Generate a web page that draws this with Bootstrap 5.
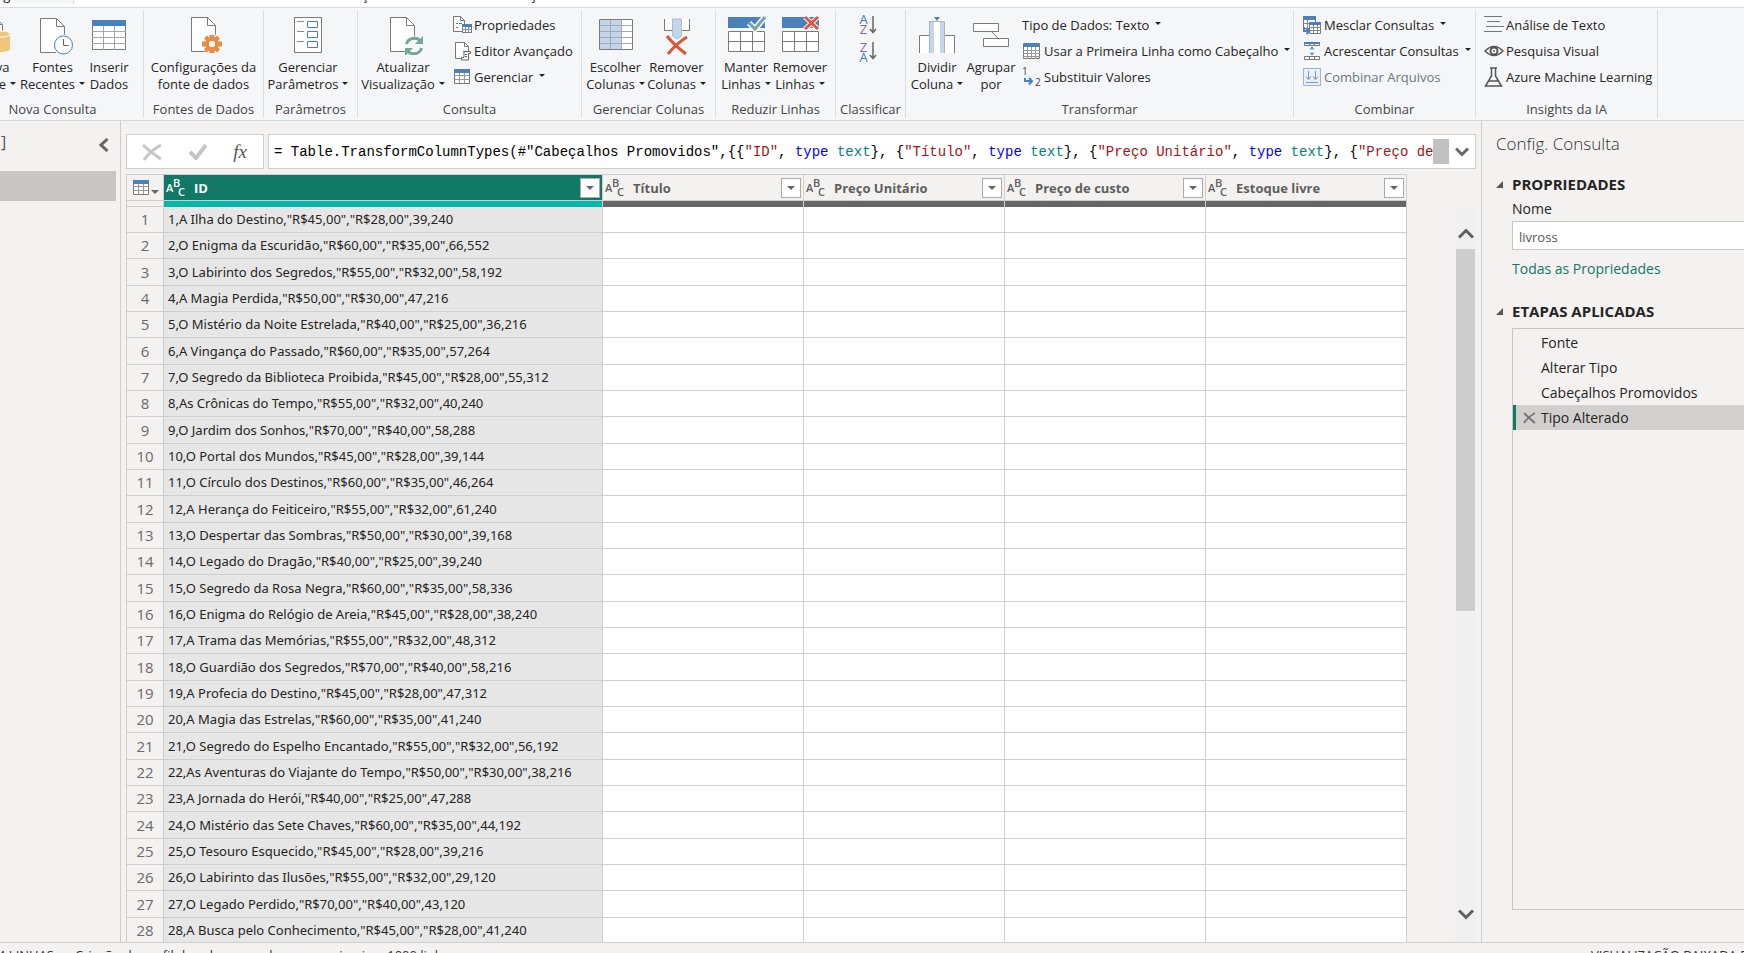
<!DOCTYPE html>
<html lang="pt-BR">
<head>
<meta charset="utf-8">
<meta name="viewport" content="width=device-width, initial-scale=1">
<title>Editor do Power Query</title>
<link href="https://cdn.jsdelivr.net/npm/bootstrap@5.3.0/dist/css/bootstrap.min.css" rel="stylesheet">
<style>
  :root { --line: #d0cecc; --pane: #f3f2f1; --ribbon: #f5f6f8; --ink: #252423; --accent: #117865; }
  body { font-family: "Open Sans", "Noto Sans", sans-serif; font-size: 13px; line-height: 17px; color: var(--ink); background: var(--pane); }
  button { font: inherit; color: inherit; background: none; border: 0; padding: 0; }
  svg { display: block; flex: none; }

  .tab-strip { height: 8px; background: #fff; border-bottom: 1px solid #d8dadc; gap: 32px; padding-left: 90px; }
  .tab-strip a { color: var(--ink); text-decoration: none; white-space: nowrap; line-height: 17px; margin-bottom: 3px; }
  .tab-strip .current-tab { position: absolute; left: 0; width: 74px; height: 8px; background: var(--ribbon); border-right: 1px solid #d8dadc; display: flex; align-items: flex-end; justify-content: flex-end; padding-right: 6px; overflow: hidden; }

  .ribbon { display: grid; grid-template-columns: 144px 120px 94px 224px 134px 120px 70px 388px 182px 182px; height: 113px; background: var(--ribbon); border-bottom: 1px solid #d4d6d8; padding: 2px 0; }
  .ribbon-group { border-right: 1px solid #dcdee0; display: flex; flex-direction: column; min-width: 0; overflow: hidden; }
  .ribbon-body { flex: 1; display: flex; justify-content: center; min-width: 0; }
  .ribbon-title { text-align: center; color: #444; height: 17px; }
  .new-query .ribbon-body { justify-content: flex-end; gap: 4px; padding-right: 14px; }
  .new-query .ribbon-title { padding-right: 38px; }
  .lean-left { padding-right: 5px; }
  .big-btn { display: flex; flex-direction: column; align-items: center; white-space: nowrap; padding-top: 5px; flex: none; }
  .big-btn svg.pic { width: 40px; height: 40px; margin-bottom: 4px; }
  .small-stack { display: flex; flex-direction: column; align-items: flex-start; padding-top: 2px; }
  .small-btn { display: flex; align-items: center; height: 26px; gap: 2px; white-space: nowrap; }
  .small-btn svg.pic { width: 20px; height: 20px; }
  .caret { display: inline-block; border: 3px solid transparent; border-top-color: #222; border-bottom: 0; margin-left: 4px; vertical-align: 4px; }
  .small-btn .caret { margin-bottom: 4px; }
  .w-sm { width: 54px; } .w-md { width: 61px; } .w-lg { width: 90px; }
  .sort-btn { display: flex; align-items: center; gap: 1px; font-size: 13px; line-height: 10px; }
  .sort-btn > span { display: flex; flex-direction: column; align-items: center; }
  .letter-a { color: #3f78b8; }
  .letter-z { color: #8d5fb5; }

  .queries { width: 121px; border-right: 1px solid var(--line); }
  .queries-head { height: 50px; padding: 13px 11px 0 1px; font-size: 16px; color: #555; }
  .query-selected { height: 30px; margin-right: 4px; background: #c8c6c4; }

  .formula-row { padding: 13px 5px 5px; gap: 4px; }
  .formula-tools { width: 138px; height: 35px; border: 1px solid var(--line); background: #fff; padding: 0 16px 0 15px; }
  .fx-btn { font-family: "Liberation Serif", serif; font-size: 19px; font-style: italic; color: #555; }
  .formula-box { height: 35px; border: 1px solid var(--line); background: #fff; padding-left: 5px; min-width: 0; }
  .formula-text { font-family: "Liberation Mono", monospace; font-size: 14px; line-height: 19px; padding-top: 2px; white-space: pre; overflow: hidden; color: #000; }
  .formula-text b { font-weight: 400; color: #a31515; }
  .formula-text i { font-style: normal; color: #0000ff; }
  .formula-text u { text-decoration: none; color: #008080; }
  .formula-thumb { width: 16px; height: 25px; background: #c2c1bf; }
  .formula-more { width: 26px; }

  .grid-row { min-height: 0; padding: 0 5px; overflow: hidden; }
  .data-grid { table-layout: fixed; width: 1281px; border-collapse: separate; border-spacing: 0; border-left: 1px solid var(--line); border-top: 1px solid var(--line); align-self: flex-start; background: #fff; }
  .data-grid th, .data-grid td { border-right: 1px solid var(--line); border-bottom: 1px solid var(--line); padding: 0; white-space: nowrap; overflow: hidden; font-size: 13px; line-height: 17px; }
  .num-col { width: 37px; } .id-col { width: 439px; } .val-col { width: 201px; }
  .data-grid thead th { height: 26px; background: var(--pane); color: #605e5c; font-weight: 700; }
  .data-grid thead th.picked { background: var(--accent); color: #fff; }
  .data-grid .quality-bar td { height: 6px; background: #666; border-bottom: 0; }
  .data-grid .quality-bar td:first-child { background: var(--pane); border-bottom: 1px solid var(--line); }
  .data-grid .quality-bar td.picked { background: #01b8aa; }
  .data-grid tbody tr { height: 26px; }
  .data-grid tbody tr:nth-child(3n) { height: 27px; }
  .data-grid tbody th { background: var(--pane); color: #6b6967; font-weight: 400; font-size: 15px; text-align: center; }
  .data-grid tbody td:nth-child(2) { background: #e6e6e6; padding-left: 4px; font-family: "Noto Sans", sans-serif; }
  .col-head { display: flex; align-items: center; height: 25px; padding: 0 2px; }
  .col-head span { flex: 1; padding: 2px 0 0 8px; }
  .filter-btn { width: 20px; height: 20px; background: #fff; border: 1px solid #acaaa8; display: flex; align-items: center; justify-content: center; }
  .tri { border: 4px solid transparent; border-top-color: #666; border-bottom: 0; }
  .v-scroll { width: 21px; margin-top: 32px; background: #f0f0f0; padding: 22px 0; }
  .v-thumb { width: 19px; height: 362px; margin-top: 10px; background: #cdcdcd; }

  .settings { width: 263px; border-left: 1px solid var(--line); padding: 11px 0 32px 14px; font-size: 14px; }
  .settings h2 { font-size: 17px; line-height: 24px; font-weight: 300; margin: 0 0 18px; color: #333; }
  .settings h3 { font-size: 15px; line-height: 20px; font-weight: 700; margin: 0; display: flex; align-items: center; }
  .settings h3 svg { margin-right: 9px; }
  .indent { padding-left: 16px; }
  .settings label { line-height: 24px; padding-top: 3px; display: block; }
  .settings input { width: 100%; height: 29px; border: 1px solid #c8c6c4; border-right: 0; border-radius: 0; padding: 4px 6px 2px; color: #555; font-size: 13px; background: #fff; }
  .settings a { color: var(--accent); text-decoration: none; display: block; line-height: 20px; margin: 9px 0 22px; }
  .steps { flex: 1; margin-left: 16px; border: 1px solid #c8c6c4; border-right: 0; margin-top: 7px; padding: 1px 0 0; list-style: none; }
  .steps li { height: 25px; line-height: 25px; padding-left: 27px; border-left: 1px solid transparent; }
  .steps li.active-step { background: #d2d0ce; border-left: 3px solid var(--accent); padding-left: 7px; display: flex; align-items: center; gap: 5px; }

  .status-bar { height: 11px; border-top: 1px solid var(--line); overflow: hidden; padding-top: 4px; white-space: nowrap; color: #333; }
  .status-counts { width: 54px; display: flex; justify-content: flex-end; margin-right: 21px; }
  .status-preview { width: 153px; }
</style>
</head>
<body class="d-flex flex-column vh-100 overflow-hidden">

<svg class="d-none" aria-hidden="true">
  <symbol id="i-abc" viewBox="0 0 20 20"><g fill="currentColor" font-family="Open Sans, Noto Sans, sans-serif" font-weight="600" font-size="11"><text x="0" y="14">A</text><text x="7" y="9">B</text><text x="12" y="18">C</text></g></symbol>
  <symbol id="i-mini-table" viewBox="0 0 20 20"><path d="M2.500 2.500h15v14h-15z" fill="#fff" stroke="#777"/><path d="M2.500 8.500h15M2.500 12.500h15M7.500 5v11M12.500 5v11" stroke="#999" fill="none"/><path d="M2 2h16v4H2z" fill="#4a80bb"/></symbol>
</svg>

<nav class="tab-strip d-flex align-items-end flex-shrink-0 overflow-hidden position-relative" aria-label="Guias">
  <a class="current-tab" href="#">Página Inicial</a>
  <a href="#">Transformar</a><a href="#">Adicionar Coluna</a><a href="#">Exibição</a><a href="#">Ferramentas</a><a href="#">Ajuda</a>
</nav>

<header class="ribbon flex-shrink-0">
  <section class="ribbon-group new-query">
    <div class="ribbon-body">
      <button class="big-btn"><svg class="pic" viewBox="0 0 40 40"><path d="M10.500 2.500h11l7 7v24h-18z" fill="#fff" stroke="#7a7a7a"/><path d="M21.500 2.500v7h7" fill="none" stroke="#7a7a7a"/><path d="M20 19v16q8 4 16 0V19z" fill="#efc577"/><ellipse cx="28" cy="19" rx="8" ry="3" fill="#efc577" stroke="#fff"/></svg><span>Nova</span><span>Fonte<i class="caret"></i></span></button>
      <button class="big-btn"><svg class="pic" viewBox="0 0 40 40"><path d="M7.500 3.500h16l8 8v26h-24z" fill="#fff" stroke="#7a7a7a"/><path d="M23.500 3.500v8h8" fill="none" stroke="#7a7a7a"/><circle cx="30.500" cy="30" r="10.500" fill="#f5f6f8"/><circle cx="30.500" cy="30" r="9" fill="#fff" stroke="#4a80bb"/><path d="M30.500 24v6.500h5" fill="none" stroke="#666"/></svg><span>Fontes</span><span>Recentes<i class="caret"></i></span></button>
      <button class="big-btn"><svg class="pic" viewBox="0 0 40 40"><path d="M3.500 5.500h33v29h-33z" fill="#fff" stroke="#7a7a7a"/><path d="M3 16.500h34M3 22.500h34M3 28.500h34M14.500 11v24M25.500 11v24" stroke="#a8a8a8"/><path d="M3 5h34v6H3z" fill="#4a80bb"/></svg><span>Inserir</span><span>Dados</span></button>
    </div>
    <div class="ribbon-title">Nova Consulta</div>
  </section>

  <section class="ribbon-group">
    <div class="ribbon-body">
      <button class="big-btn"><svg class="pic" viewBox="0 0 40 40"><path d="M7.500 2.500h16l8 8v26h-24z" fill="#fff" stroke="#7a7a7a"/><path d="M23.500 2.500v8h8" fill="none" stroke="#7a7a7a"/><circle cx="28" cy="29" r="10" fill="#f5f6f8"/><circle cx="28" cy="29" r="5" fill="none" stroke="#e68e45" stroke-width="4"/><path d="M25.500 20h5v5h-5zM25.500 33h5v5h-5zM18 26.500h5v5h-5zM33 26.500h5v5h-5zM20 23.500l3-3 4 4-3 3zM36 23.500l-3-3-4 4 3 3zM20 34.500l3 3 4-4-3-3zM36 34.500l-3 3-4-4 3-3z" fill="#e68e45"/><circle cx="28" cy="29" r="3" fill="#f5f6f8"/></svg><span>Configurações da</span><span>fonte de dados</span></button>
    </div>
    <div class="ribbon-title">Fontes de Dados</div>
  </section>

  <section class="ribbon-group">
    <div class="ribbon-body lean-left">
      <button class="big-btn"><svg class="pic" viewBox="0 0 40 40"><path d="M6.500 2.500h27v35h-27z" fill="#fff" stroke="#7a7a7a"/><path d="M9 6.500h7M9 16.500h7M9 26.500h7" stroke="#888"/><path d="M19.500 6.500h10v6h-10zM19.500 16.500h10v6h-10zM19.500 26.500h10v6h-10z" fill="#fff" stroke="#4a80bb"/></svg><span>Gerenciar</span><span>Parâmetros<i class="caret"></i></span></button>
    </div>
    <div class="ribbon-title">Parâmetros</div>
  </section>

  <section class="ribbon-group">
    <div class="ribbon-body justify-content-start gap-1">
      <button class="big-btn w-lg"><svg class="pic" viewBox="0 0 40 40"><path d="M7.500 2.500h16l8 8v26h-24z" fill="#fff" stroke="#7a7a7a"/><path d="M23.500 2.500v8h8" fill="none" stroke="#7a7a7a"/><circle cx="31" cy="31" r="10" fill="#f5f6f8"/><path d="M23.500 29a8 7.500 0 0 1 14-3M38.500 33a8 7.500 0 0 1-14 3" fill="none" stroke="#76a797" stroke-width="3"/><path d="M40 21v8h-8zM22 41v-8h8z" fill="#76a797"/></svg><span>Atualizar</span><span>Visualização<i class="caret"></i></span></button>
      <div class="small-stack">
        <button class="small-btn"><svg class="pic" viewBox="0 0 20 20"><path d="M1.500 1.500h7l4 4v11h-11z" fill="#fff" stroke="#777"/><path d="M8.500 1.500v4h4M4 8.500h2M7 8.500h3M4 12.500h2" fill="none" stroke="#777"/><path d="M10.500 9.500h9v8h-9z" fill="#fff" stroke="#777"/><path d="M10 9h10v3H10z" fill="#4a80bb"/><path d="M13.500 12v6M16.500 12v6M10 14.500h10" stroke="#888"/></svg>Propriedades</button>
        <button class="small-btn"><svg class="pic" viewBox="0 0 20 20"><path d="M3.500 1.500h9l4 4v12h-13z" fill="#fff" stroke="#777"/><path d="M12.500 1.500v4h4" fill="none" stroke="#777"/><path d="M11 10.500h7.500v2h-2v6.500H9.500v-2.500H12v-6" fill="#fff" stroke="#666"/><path d="M13 13.500h2M13 15.500h2" stroke="#666"/></svg>Editor Avançado</button>
        <button class="small-btn"><svg class="pic"><use href="#i-mini-table"/></svg>Gerenciar<i class="caret"></i></button>
      </div>
    </div>
    <div class="ribbon-title">Consulta</div>
  </section>

  <section class="ribbon-group">
    <div class="ribbon-body lean-left">
      <button class="big-btn w-md"><svg class="pic" viewBox="0 0 40 40"><path d="M3.500 4.500h33v30h-33z" fill="#fff"/><path d="M4 5h21v29H4z" fill="#c3d5ea"/><path d="M3 10.500h34M3 16.500h34M3 22.500h34M3 28.500h34M14.500 5v30M25.500 5v30" stroke="#a3a9b0"/><path d="M3.500 4.500h33v30h-33z" fill="none" stroke="#7a7a7a"/></svg><span>Escolher</span><span>Colunas<i class="caret"></i></span></button>
      <button class="big-btn w-md"><svg class="pic" viewBox="0 0 40 40"><path d="M7.500 4v11.500h8V4M24.500 4v11.500h8V4" fill="#fff" stroke="#7a7a7a"/><path d="M15.500 4h9v17l-4.500 3-4.500-3z" fill="#c3d5ea" stroke="#a9bdd3"/><path d="M10 21q6 8 19 18M29 22q-10 6-18 17" fill="none" stroke="#f5f6f8" stroke-width="5"/><path d="M10 21q6 8 19 18" fill="none" stroke="#d8593a" stroke-width="3"/><path d="M30 22q-10 6-19 17" fill="none" stroke="#d8593a" stroke-width="3"/></svg><span>Remover</span><span>Colunas<i class="caret"></i></span></button>
    </div>
    <div class="ribbon-title">Gerenciar Colunas</div>
  </section>

  <section class="ribbon-group">
    <div class="ribbon-body lean-left">
      <button class="big-btn w-sm"><svg class="pic" viewBox="0 0 40 40"><path d="M2 2h37v11H2z" fill="#4a80bb"/><path d="M2.500 16.500h36v20h-36zM2.500 26.500h36M14.500 16.500v20M26.500 16.500v20" fill="#fff" stroke="#7a7a7a"/><path d="M23 8l6 6L39 2" fill="none" stroke="#f5f6f8" stroke-width="6"/><path d="M23 8l6 6L39 2" fill="none" stroke="#76a797" stroke-width="3"/></svg><span>Manter</span><span>Linhas<i class="caret"></i></span></button>
      <button class="big-btn w-sm"><svg class="pic" viewBox="0 0 40 40"><path d="M2 2h37v11H2z" fill="#4a80bb"/><path d="M2.500 16.500h36v20h-36zM2.500 26.500h36M14.500 16.500v20M26.500 16.500v20" fill="#fff" stroke="#7a7a7a"/><path d="M25 2l13 12M38 2L25 14" stroke="#f5f6f8" stroke-width="5"/><path d="M25 2l13 12M38 2L25 14" stroke="#d8593a" stroke-width="3"/></svg><span>Remover</span><span>Linhas<i class="caret"></i></span></button>
    </div>
    <div class="ribbon-title">Reduzir Linhas</div>
  </section>

  <section class="ribbon-group">
    <div class="ribbon-body flex-column justify-content-start align-items-center gap-2 pt-1 lean-left">
      <button class="sort-btn" aria-label="Classificar em ordem crescente"><span><span class="letter-a">A</span><span class="letter-z">Z</span></span><svg width="8" height="20" viewBox="0 0 8 20"><path d="M4 2v17M1 15l3 3.500L7 15" fill="none" stroke="#666" stroke-width="1.500"/></svg></button>
      <button class="sort-btn" aria-label="Classificar em ordem decrescente"><span><span class="letter-z">Z</span><span class="letter-a">A</span></span><svg width="8" height="20" viewBox="0 0 8 20"><path d="M4 0v17M1 13l3 3.500L7 13" fill="none" stroke="#666" stroke-width="1.500"/></svg></button>
    </div>
    <div class="ribbon-title">Classificar</div>
  </section>

  <section class="ribbon-group">
    <div class="ribbon-body justify-content-start ps-1">
      <button class="big-btn w-sm"><svg class="pic" viewBox="0 0 40 40"><path d="M2.500 38V20.500h10V38M27.500 38V20.500h10V38" fill="#fff" stroke="#7a7a7a"/><path d="M12.500 38V6.500h15V38" fill="#fff" stroke="#a9b4c0"/><path d="M13 7h4v31h-4zM23 7h4v31h-4z" fill="#c3d5ea"/><path d="M17 2h6l-3 4z" fill="#4a80bb"/></svg><span>Dividir</span><span>Coluna<i class="caret"></i></span></button>
      <button class="big-btn w-sm"><svg class="pic" viewBox="0 0 40 40"><path d="M20 16l7 7" stroke="#7a7a7a"/><path d="M2.500 8.500h25v8h-25zM12.500 23.500h25v8h-25z" fill="#fff" stroke="#7a7a7a"/></svg><span>Agrupar</span><span>por</span></button>
      <div class="small-stack ms-1">
        <button class="small-btn">Tipo de Dados: Texto<i class="caret"></i></button>
        <button class="small-btn"><svg class="pic" viewBox="0 0 20 20"><path d="M1.500 2.500h16v15h-16z" fill="#fff" stroke="#777"/><path d="M1 9.500h17M1 12.500h17M1 15.500h17M5.500 3v15M9.500 3v15M13.500 3v15" stroke="#999"/><path d="M2 2h15v4H2z" fill="#4a80bb"/></svg>Usar a Primeira Linha como Cabeçalho<i class="caret"></i></button>
        <button class="small-btn"><svg class="pic" viewBox="0 0 20 20"><g font-size="10" fill="#444" font-family="Open Sans, sans-serif"><text x="0" y="8">1</text><text x="13" y="19">2</text></g><path d="M3 11v3h7M7 11l3 3-3 3.500" fill="none" stroke="#4a80bb" stroke-width="2"/></svg>Substituir Valores</button>
      </div>
    </div>
    <div class="ribbon-title">Transformar</div>
  </section>

  <section class="ribbon-group">
    <div class="ribbon-body justify-content-start ps-2">
      <div class="small-stack">
        <button class="small-btn"><svg class="pic" viewBox="0 0 20 20"><path d="M1.500 1.500h12v12h-12z" fill="#fff" stroke="#777"/><path d="M1 1h13v4H1z" fill="#4a80bb"/><path d="M5.500 5v8M1 8.500h12" stroke="#888"/><path d="M7.500 7.500h11v11h-11z" fill="#fff" stroke="#777"/><path d="M7 7h12v3H7z" fill="#4a80bb"/><path d="M11.500 10v8M15.500 10v8M7 12.500h12M7 15.500h12" stroke="#888"/><path d="M2 12v4h5M4.500 13.500l3 2.500-3 3" fill="none" stroke="#4a80bb" stroke-width="2"/></svg>Mesclar Consultas<i class="caret"></i></button>
        <button class="small-btn"><svg class="pic" viewBox="0 0 20 20"><path d="M2.500 1.500h15v3h-15zM2.500 15.500h15v3h-15zM7.500 2v3M12.500 2v3M7.500 15v3M12.500 15v3" fill="#fff" stroke="#777"/><path d="M2 1h16v2H2z" fill="#4a80bb"/><path d="M10 6v3M10 11v3M8 8.500L10 6l2 2.500M8 11.500l2 2.500 2-2.500" fill="none" stroke="#4a80bb"/></svg>Acrescentar Consultas<i class="caret"></i></button>
        <button class="small-btn text-secondary"><svg class="pic" viewBox="0 0 20 20"><path d="M1.500 1.500h17v17h-17z" fill="#e8f0fa" stroke="#9db4d0"/><path d="M6.500 4v8M4 9.500l2.500 3 2.500-3M13.500 4v8M11 9.500l2.500 3 2.500-3M4 15.500h12" fill="none" stroke="#7d95b5"/></svg>Combinar Arquivos</button>
      </div>
    </div>
    <div class="ribbon-title">Combinar</div>
  </section>

  <section class="ribbon-group">
    <div class="ribbon-body justify-content-start ps-2">
      <div class="small-stack">
        <button class="small-btn"><svg class="pic" viewBox="0 0 20 20"><path d="M0 1.500h18M3 6.500h13M2 11.500h18M0 16.500h18" stroke="#777"/></svg>Análise de Texto</button>
        <button class="small-btn"><svg class="pic" viewBox="0 0 20 20"><path d="M1 10q9-9 18 0-9 9-18 0z" fill="#fff" stroke="#555" stroke-width="1.500"/><circle cx="10" cy="10" r="3.500" fill="#fff" stroke="#555" stroke-width="2"/><circle cx="10" cy="10" r="1" fill="#555"/></svg>Pesquisa Visual</button>
        <button class="small-btn"><svg class="pic" viewBox="0 0 20 20"><path d="M6 1h7M7.500 1v8L1.500 19h16l-6-10V1M4.500 14h10" fill="none" stroke="#555" stroke-width="1.500"/></svg>Azure Machine Learning</button>
      </div>
    </div>
    <div class="ribbon-title">Insights da IA</div>
  </section>
</header>

<main class="d-flex flex-fill overflow-hidden">
  <aside class="queries flex-shrink-0">
    <div class="queries-head d-flex justify-content-between"><span>]</span>
      <button class="align-self-start mt-1" aria-label="Recolher consultas"><svg width="10" height="14" viewBox="0 0 10 14"><path d="M8.500 1L2 7l6.500 6" fill="none" stroke="#666" stroke-width="3"/></svg></button></div>
    <div class="query-selected"></div>
  </aside>

  <section class="d-flex flex-column flex-fill overflow-hidden">
    <div class="formula-row d-flex">
      <div class="formula-tools d-flex align-items-center justify-content-between flex-shrink-0">
        <button aria-label="Cancelar"><svg width="20" height="18" viewBox="0 0 20 18"><path d="M1 2q7 7 18 14M19 2Q8 8 2 17" fill="none" stroke="#c8c6c4" stroke-width="3"/></svg></button>
        <button aria-label="Confirmar"><svg width="18" height="16" viewBox="0 0 18 16"><path d="M1 8l6 6L17 1" fill="none" stroke="#c8c6c4" stroke-width="4"/></svg></button>
        <button class="fx-btn" aria-label="Inserir função">fx</button>
      </div>
      <div class="formula-box d-flex align-items-center flex-fill">
        <div class="formula-text flex-fill" role="textbox" aria-label="Fórmula">= Table.TransformColumnTypes(#"Cabeçalhos Promovidos",{{<b>"ID"</b>, <i>type</i> <u>text</u>}, {<b>"Título"</b>, <i>type</i> <u>text</u>}, {<b>"Preço Unitário"</b>, <i>type</i> <u>text</u>}, {<b>"Preço de</b></div>
        <div class="formula-thumb flex-shrink-0"></div>
        <button class="formula-more d-flex justify-content-center flex-shrink-0" aria-label="Expandir"><svg width="14" height="10" viewBox="0 0 14 10"><path d="M1 1.500l6 6 6-6" fill="none" stroke="#666" stroke-width="3"/></svg></button>
      </div>
    </div>

    <div class="grid-row d-flex flex-fill justify-content-between">
      <table class="data-grid flex-shrink-0">
        <colgroup><col class="num-col"><col class="id-col"><col class="val-col"><col class="val-col"><col class="val-col"><col class="val-col"></colgroup>
        <thead>
          <tr>
            <th><button class="d-flex align-items-center ps-1" aria-label="Opções da tabela"><svg width="20" height="20"><use href="#i-mini-table"/></svg><i class="tri mt-2"></i></button></th>
            <th class="picked" scope="col"><div class="col-head"><svg width="20" height="20"><use href="#i-abc"/></svg><span>ID</span><button class="filter-btn" aria-label="Filtrar ID"><i class="tri"></i></button></div></th>
            <th scope="col"><div class="col-head"><svg width="20" height="20"><use href="#i-abc"/></svg><span>Título</span><button class="filter-btn" aria-label="Filtrar Título"><i class="tri"></i></button></div></th>
            <th scope="col"><div class="col-head"><svg width="20" height="20"><use href="#i-abc"/></svg><span>Preço Unitário</span><button class="filter-btn" aria-label="Filtrar Preço Unitário"><i class="tri"></i></button></div></th>
            <th scope="col"><div class="col-head"><svg width="20" height="20"><use href="#i-abc"/></svg><span>Preço de custo</span><button class="filter-btn" aria-label="Filtrar Preço de custo"><i class="tri"></i></button></div></th>
            <th scope="col"><div class="col-head"><svg width="20" height="20"><use href="#i-abc"/></svg><span>Estoque livre</span><button class="filter-btn" aria-label="Filtrar Estoque livre"><i class="tri"></i></button></div></th>
          </tr>
          <tr class="quality-bar"><td></td><td class="picked"></td><td></td><td></td><td></td><td></td></tr>
        </thead>
        <tbody>
          <tr><th scope="row">1</th><td>1,A Ilha do Destino,"R$45,00","R$28,00",39,240</td><td></td><td></td><td></td><td></td></tr>
          <tr><th scope="row">2</th><td>2,O Enigma da Escuridão,"R$60,00","R$35,00",66,552</td><td></td><td></td><td></td><td></td></tr>
          <tr><th scope="row">3</th><td>3,O Labirinto dos Segredos,"R$55,00","R$32,00",58,192</td><td></td><td></td><td></td><td></td></tr>
          <tr><th scope="row">4</th><td>4,A Magia Perdida,"R$50,00","R$30,00",47,216</td><td></td><td></td><td></td><td></td></tr>
          <tr><th scope="row">5</th><td>5,O Mistério da Noite Estrelada,"R$40,00","R$25,00",36,216</td><td></td><td></td><td></td><td></td></tr>
          <tr><th scope="row">6</th><td>6,A Vingança do Passado,"R$60,00","R$35,00",57,264</td><td></td><td></td><td></td><td></td></tr>
          <tr><th scope="row">7</th><td>7,O Segredo da Biblioteca Proibida,"R$45,00","R$28,00",55,312</td><td></td><td></td><td></td><td></td></tr>
          <tr><th scope="row">8</th><td>8,As Crônicas do Tempo,"R$55,00","R$32,00",40,240</td><td></td><td></td><td></td><td></td></tr>
          <tr><th scope="row">9</th><td>9,O Jardim dos Sonhos,"R$70,00","R$40,00",58,288</td><td></td><td></td><td></td><td></td></tr>
          <tr><th scope="row">10</th><td>10,O Portal dos Mundos,"R$45,00","R$28,00",39,144</td><td></td><td></td><td></td><td></td></tr>
          <tr><th scope="row">11</th><td>11,O Círculo dos Destinos,"R$60,00","R$35,00",46,264</td><td></td><td></td><td></td><td></td></tr>
          <tr><th scope="row">12</th><td>12,A Herança do Feiticeiro,"R$55,00","R$32,00",61,240</td><td></td><td></td><td></td><td></td></tr>
          <tr><th scope="row">13</th><td>13,O Despertar das Sombras,"R$50,00","R$30,00",39,168</td><td></td><td></td><td></td><td></td></tr>
          <tr><th scope="row">14</th><td>14,O Legado do Dragão,"R$40,00","R$25,00",39,240</td><td></td><td></td><td></td><td></td></tr>
          <tr><th scope="row">15</th><td>15,O Segredo da Rosa Negra,"R$60,00","R$35,00",58,336</td><td></td><td></td><td></td><td></td></tr>
          <tr><th scope="row">16</th><td>16,O Enigma do Relógio de Areia,"R$45,00","R$28,00",38,240</td><td></td><td></td><td></td><td></td></tr>
          <tr><th scope="row">17</th><td>17,A Trama das Memórias,"R$55,00","R$32,00",48,312</td><td></td><td></td><td></td><td></td></tr>
          <tr><th scope="row">18</th><td>18,O Guardião dos Segredos,"R$70,00","R$40,00",58,216</td><td></td><td></td><td></td><td></td></tr>
          <tr><th scope="row">19</th><td>19,A Profecia do Destino,"R$45,00","R$28,00",47,312</td><td></td><td></td><td></td><td></td></tr>
          <tr><th scope="row">20</th><td>20,A Magia das Estrelas,"R$60,00","R$35,00",41,240</td><td></td><td></td><td></td><td></td></tr>
          <tr><th scope="row">21</th><td>21,O Segredo do Espelho Encantado,"R$55,00","R$32,00",56,192</td><td></td><td></td><td></td><td></td></tr>
          <tr><th scope="row">22</th><td>22,As Aventuras do Viajante do Tempo,"R$50,00","R$30,00",38,216</td><td></td><td></td><td></td><td></td></tr>
          <tr><th scope="row">23</th><td>23,A Jornada do Herói,"R$40,00","R$25,00",47,288</td><td></td><td></td><td></td><td></td></tr>
          <tr><th scope="row">24</th><td>24,O Mistério das Sete Chaves,"R$60,00","R$35,00",44,192</td><td></td><td></td><td></td><td></td></tr>
          <tr><th scope="row">25</th><td>25,O Tesouro Esquecido,"R$45,00","R$28,00",39,216</td><td></td><td></td><td></td><td></td></tr>
          <tr><th scope="row">26</th><td>26,O Labirinto das Ilusões,"R$55,00","R$32,00",29,120</td><td></td><td></td><td></td><td></td></tr>
          <tr><th scope="row">27</th><td>27,O Legado Perdido,"R$70,00","R$40,00",43,120</td><td></td><td></td><td></td><td></td></tr>
          <tr><th scope="row">28</th><td>28,A Busca pelo Conhecimento,"R$45,00","R$28,00",41,240</td><td></td><td></td><td></td><td></td></tr>
        </tbody>
      </table>
      <div class="v-scroll d-flex flex-column align-items-center flex-shrink-0">
        <svg width="16" height="11" viewBox="0 0 16 11"><path d="M1 9.500l7-7 7 7" fill="none" stroke="#5f5f5f" stroke-width="3"/></svg>
        <div class="v-thumb"></div>
        <svg class="mt-auto" width="16" height="11" viewBox="0 0 16 11"><path d="M1 1.500l7 7 7-7" fill="none" stroke="#5f5f5f" stroke-width="3"/></svg>
      </div>
    </div>
  </section>

  <aside class="settings d-flex flex-column flex-shrink-0">
    <h2>Config. Consulta</h2>
    <h3><svg width="7" height="7"><path d="M7 0v7H0z" fill="#555"/></svg>PROPRIEDADES</h3>
    <div class="indent">
      <label for="query-name">Nome</label>
      <input id="query-name" type="text" value="livross">
      <a href="#">Todas as Propriedades</a>
    </div>
    <h3><svg width="7" height="7"><path d="M7 0v7H0z" fill="#555"/></svg>ETAPAS APLICADAS</h3>
    <ul class="steps mb-0">
      <li>Fonte</li>
      <li>Alterar Tipo</li>
      <li>Cabeçalhos Promovidos</li>
      <li class="active-step"><button aria-label="Excluir etapa"><svg width="13" height="12" viewBox="0 0 13 12"><path d="M1 1q5 5 11 10M12 1Q5 5 1 11" fill="none" stroke="#777" stroke-width="2"/></svg></button>Tipo Alterado</li>
    </ul>
  </aside>
</main>

<footer class="status-bar d-flex flex-shrink-0">
  <span class="status-counts">5 COLUNAS, 54 LINHAS</span>
  <span>Criação de perfil de coluna com base nas primeiras 1000 linhas</span>
  <span class="status-preview ms-auto">VISUALIZAÇÃO BAIXADA EM</span>
</footer>

<script src="https://cdn.jsdelivr.net/npm/bootstrap@5.3.0/dist/js/bootstrap.bundle.min.js"></script>
</body>
</html>
